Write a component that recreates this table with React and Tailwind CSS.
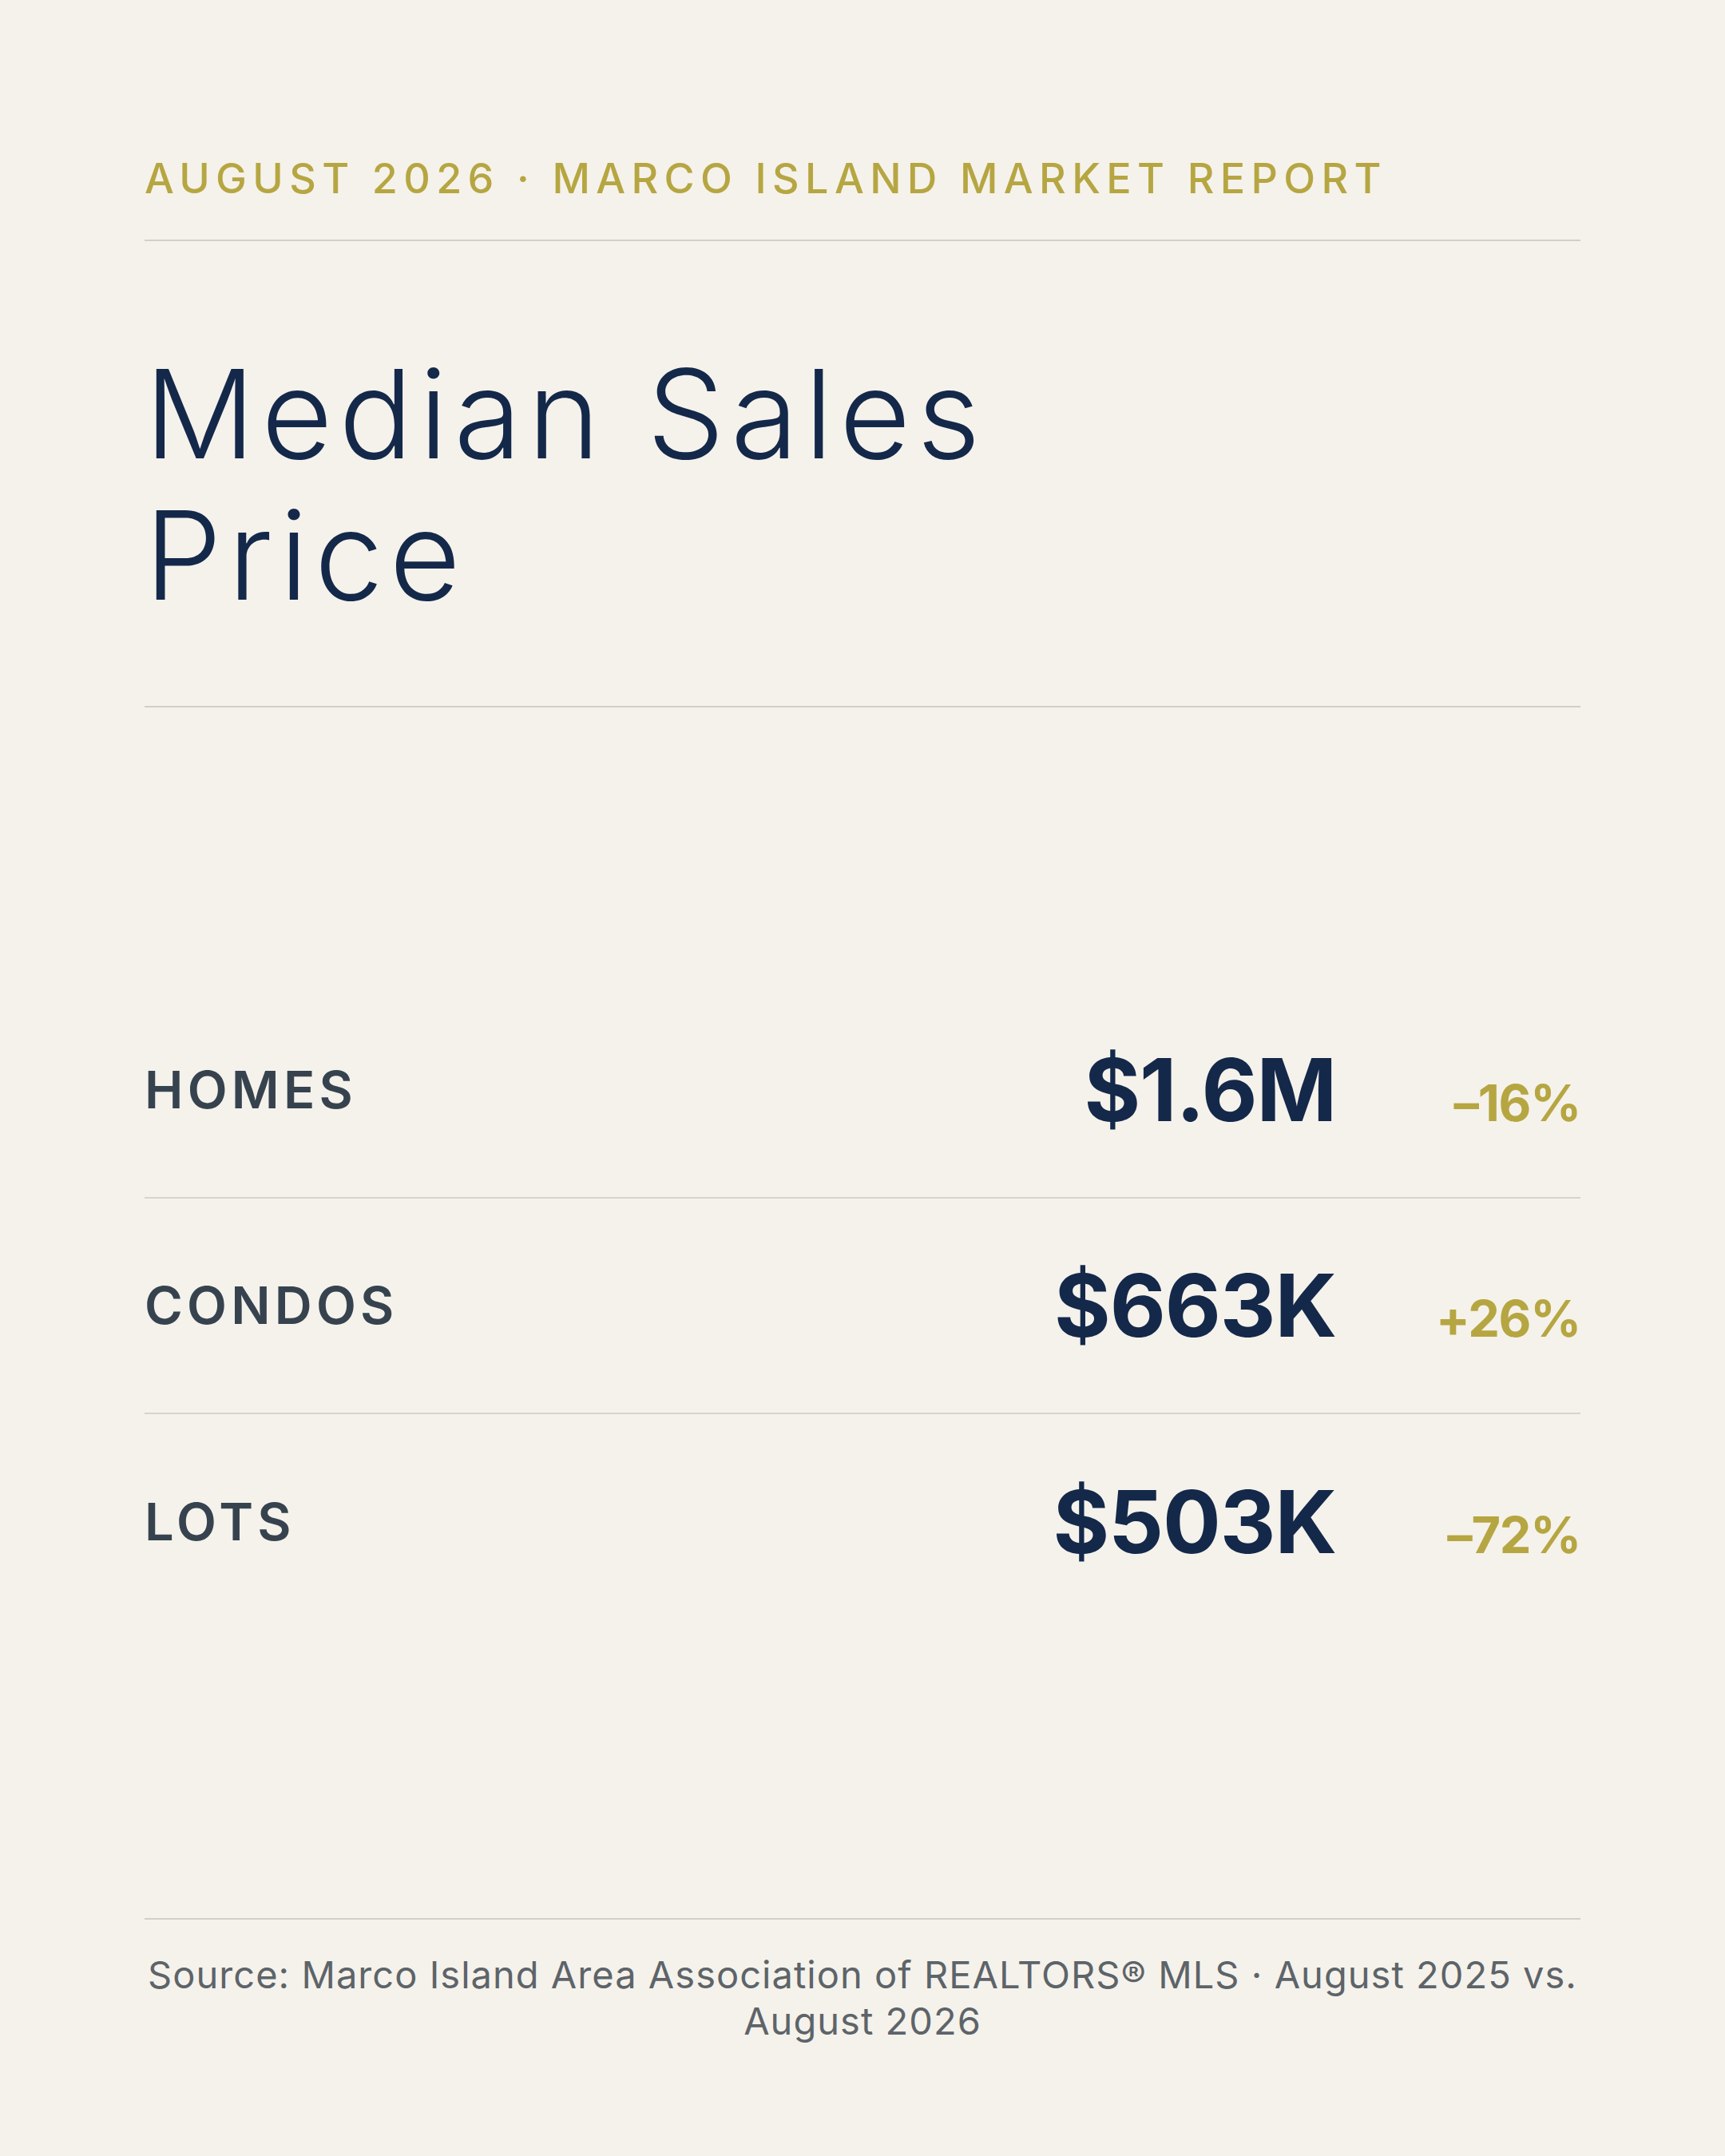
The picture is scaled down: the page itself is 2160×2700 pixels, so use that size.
import React from 'react';

const rows = [
  { label: 'HOMES', value: '$1.6M', change: '–16%' },
  { label: 'CONDOS', value: '$663K', change: '+26%' },
  { label: 'LOTS', value: '$503K', change: '–72%' },
];

const StatRow = ({ label, value, change, last }) => (
  <div
    className={
      'flex h-[270px] items-center justify-between ' +
      (last ? '' : 'border-b-2 border-[#d6d4cf]')
    }
  >
    <span className="text-[65px] font-semibold tracking-[0.08em] text-[#36434f]">
      {label}
    </span>
    <div className="flex items-baseline">
      <span className="text-[108px] font-bold leading-none tracking-[-0.01em] text-[#14284a]">
        {value}
      </span>
      <span className="w-[306px] text-right text-[63px] font-bold leading-none tracking-[-0.02em] text-[#b6a642]">
        {change}
      </span>
    </div>
  </div>
);

export default function App() {
  return (
    <div className="flex h-[2700px] w-[2160px] flex-col bg-[#f5f2eb] px-[181px] font-['Inter',sans-serif]">
      <header className="border-b-2 border-[#d0cfcb] pb-[50px] pt-[198px]">
        <p className="text-[52px] font-medium leading-none tracking-[0.142em] text-[#b6a642]">
          AUGUST 2026 · MARCO ISLAND MARKET REPORT
        </p>
      </header>

      <div className="border-b-2 border-[#d0cfcb] pb-[100px] pt-[128px]">
        <h1 className="text-[154px] font-light leading-[177px] tracking-[0.05em] text-[#14284a]">
          Median Sales
          <br />
          Price
        </h1>
      </div>

      <main className="flex flex-1 flex-col justify-center pb-[16px]">
        {rows.map((r, i) => (
          <StatRow key={r.label} {...r} last={i === rows.length - 1} />
        ))}
      </main>

      <footer className="border-t-2 border-[#d0cfcb] pb-[140px] pt-[40px]">
        <p className="text-center text-[47px] leading-[58px] tracking-[0.022em] text-[#5d6469]">
          Source: Marco Island Area Association of REALTORS® MLS · August 2025 vs. August 2026
        </p>
      </footer>
    </div>
  );
}
